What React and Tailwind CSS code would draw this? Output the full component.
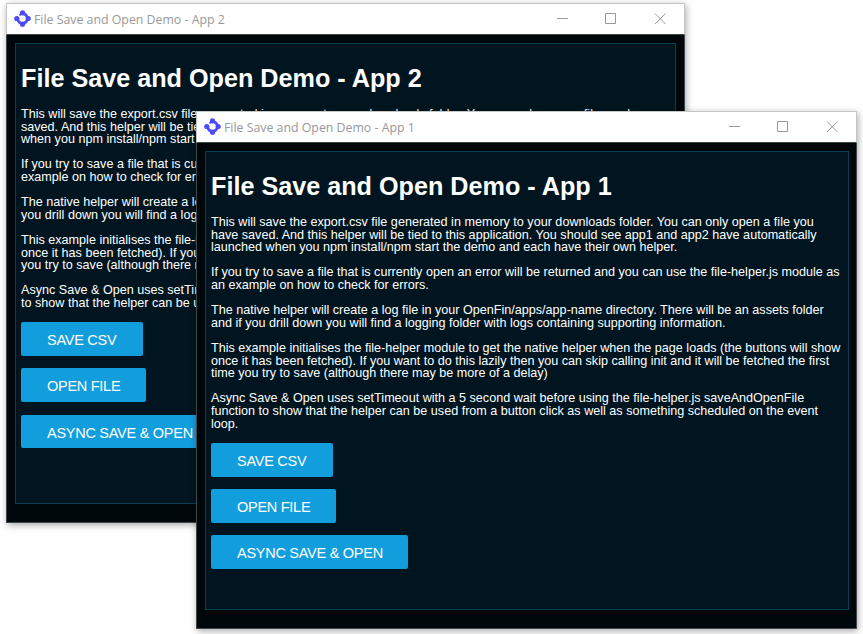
const paragraphs1 = [
  [
    'This will save the export.csv file generated in memory to your downloads folder. You can only open a file you',
    'have saved. And this helper will be tied to this application. You should see app1 and app2 have automatically',
    'launched when you npm install/npm start the demo and each have their own helper.',
  ],
  [
    'If you try to save a file that is currently open an error will be returned and you can use the file-helper.js module as',
    'an example on how to check for errors.',
  ],
  [
    'The native helper will create a log file in your OpenFin/apps/app-name directory. There will be an assets folder',
    'and if you drill down you will find a logging folder with logs containing supporting information.',
  ],
  [
    'This example initialises the file-helper module to get the native helper when the page loads (the buttons will show',
    'once it has been fetched). If you want to do this lazily then you can skip calling init and it will be fetched the first',
    'time you try to save (although there may be more of a delay)',
  ],
  [
    'Async Save & Open uses setTimeout with a 5 second wait before using the file-helper.js saveAndOpenFile',
    'function to show that the helper can be used from a button click as well as something scheduled on the event',
    'loop.',
  ],
];

const paragraphs2 = [
  [
    'This will save the export.csv file generated in memory to your downloads folder. You can only open a file you have',
    'saved. And this helper will be tied to this application. You should see app1 and app2 have automatically launched',
    'when you npm install/npm start the demo and each have their own helper.',
  ],
  [
    'If you try to save a file that is currently open an error will be returned and you can use the file-helper.js module as an',
    'example on how to check for errors.',
  ],
  [
    'The native helper will create a log file in your OpenFin/apps/app-name directory. There will be an assets folder and if',
    'you drill down you will find a logging folder with logs containing supporting information.',
  ],
  [
    'This example initialises the file-helper module to get the native helper when the page loads (the buttons will show',
    'once it has been fetched). If you want to do this lazily then you can skip calling init and it will be fetched the first time',
    'you try to save (although there may be more of a delay)',
  ],
  [
    'Async Save & Open uses setTimeout with a 5 second wait before using the file-helper.js saveAndOpenFile function',
    'to show that the helper can be used from a button click as well as something scheduled on the event loop.',
  ],
];

function Logo() {
  return (
    <svg className="mb-[2px] h-[17px] w-[17px] shrink-0" viewBox="0 0 17 17" fill="#4c48fb">
      <path
        d="M8.5 3 L12 5 L14 8.5 L12 12 L8.5 14 L5 12 L3 8.5"
        fill="none"
        stroke="#4c48fb"
        strokeWidth="2.7"
        strokeLinejoin="round"
      />
      <path d="M6.8 4.2 L5.4 5.4" stroke="#4c48fb" strokeWidth="1.8" />
      <circle cx="8.5" cy="2.8" r="2.6" />
      <circle cx="14.2" cy="8.5" r="2.6" />
      <circle cx="8.5" cy="14.2" r="2.6" />
      <circle cx="2.8" cy="8.5" r="2.6" />
    </svg>
  );
}

function Controls() {
  return (
    <svg className="ml-auto h-[12px] w-[111px] shrink-0" viewBox="0 0 111 12" fill="none" stroke="#999" strokeWidth="1">
      <path d="M0 5.5H11" />
      <path d="M48.5 0.5h10v10h-10z" />
      <path d="M98 0.5l10.5 10.5M108.5 0.5L98 11" />
    </svg>
  );
}

function Button({ children, width }) {
  return (
    <button className={`${width} block h-[33.8px] whitespace-nowrap rounded-[2px] bg-[#129ddc] pl-[26px] pt-[2px] text-left text-[14.5px] leading-[32px] tracking-[-0.27px] text-white`}>
      {children}
    </button>
  );
}

function AppWindow({ name, paragraphs, place, panel }) {
  return (
    <section className={`${place} absolute flex flex-col bg-[#00070a] shadow-[1px_2px_7px_rgba(0,0,0,0.35)]`}>
      <header className="flex h-[32px] shrink-0 items-center border border-[#c6c6c6] border-b-[#3b4541] bg-white pl-[7px] pr-[16px]">
        <Logo />
        <span className="ml-[3px] mt-[3px] whitespace-nowrap font-['Open_Sans',sans-serif] text-[12.33px] text-[#999]">
          File Save and Open Demo - {name}
        </span>
        <Controls />
      </header>
      <div className="grow border border-t-0 border-[#41484a] pl-[8px] pt-[8px]">
        <main className={`${panel} border border-[#063f57] bg-[#00151f] pl-[5px] pt-[18px] text-white`}>
          <h1 className="whitespace-nowrap text-[25.2px] font-bold leading-[32px]">File Save and Open Demo - {name}</h1>
          <div className="mt-[14.1px] flex flex-col gap-[12.6px]">
            {paragraphs.map((lines) => (
              <p key={lines[0]} className="text-[12.6px] leading-[12.6px]">
                {lines.map((line) => (
                  <span key={line} className="block whitespace-nowrap">{line}</span>
                ))}
              </p>
            ))}
          </div>
          <div className="mt-[12.6px] flex flex-col gap-[12.4px]">
            <Button width="w-[122px]">SAVE CSV</Button>
            <Button width="w-[125px]">OPEN FILE</Button>
            <Button width="w-[197px]">ASYNC SAVE &amp; OPEN</Button>
          </div>
        </main>
      </div>
    </section>
  );
}

export default function App() {
  return (
    <div className="relative h-[634px] w-[863px] overflow-hidden bg-white font-['Liberation_Sans',Arial,sans-serif]">
      <AppWindow name="App 2" paragraphs={paragraphs2} place="left-[6px] top-[3px] h-[520px] w-[679px]" panel="h-[461px] w-[661px]" />
      <AppWindow name="App 1" paragraphs={paragraphs1} place="left-[196px] top-[111px] h-[518px] w-[661px]" panel="h-[459px] w-[644px]" />
    </div>
  );
}
